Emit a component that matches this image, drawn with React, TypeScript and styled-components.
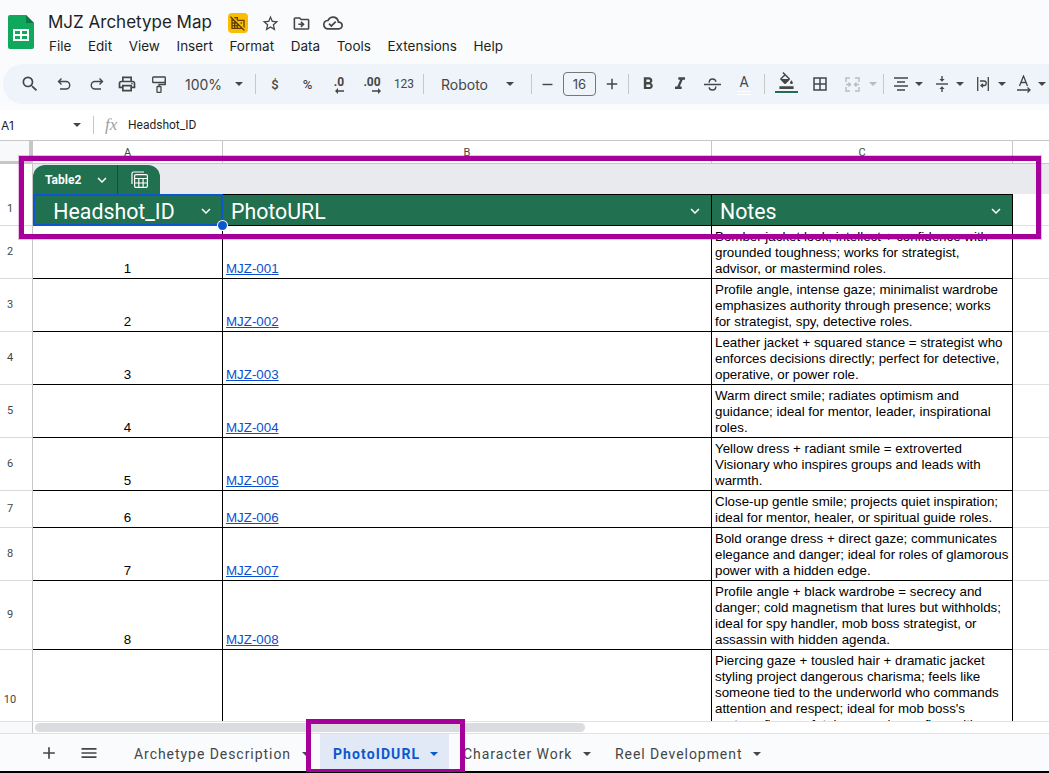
import React from 'react';
import styled, { createGlobalStyle } from 'styled-components';
import {
    MdAdd,
    MdBorderAll,
    MdFormatBold,
    MdFormatItalic,
    MdKeyboardArrowDown,
    MdMenu,
    MdOutlineCloudDone,
    MdOutlineDomainDisabled,
    MdOutlineDriveFileMove,
    MdOutlineFormatColorFill,
    MdOutlinePrint,
    MdOutlineStarBorder,
    MdRemove,
    MdSearch,
} from 'react-icons/md';

const ROWS = [
    { num: 2, height: 53, id: 1, note: 'Bomber jacket look; intellect + confidence with grounded toughness; works for strategist, advisor, or mastermind roles.' },
    { num: 3, height: 53, id: 2, note: 'Profile angle, intense gaze; minimalist wardrobe emphasizes authority through presence; works for strategist, spy, detective roles.' },
    { num: 4, height: 53, id: 3, note: 'Leather jacket + squared stance = strategist who enforces decisions directly; perfect for detective, operative, or power role.' },
    { num: 5, height: 53, id: 4, note: 'Warm direct smile; radiates optimism and guidance; ideal for mentor, leader, inspirational roles.' },
    { num: 6, height: 53, id: 5, note: 'Yellow dress + radiant smile = extroverted Visionary who inspires groups and leads with warmth.' },
    { num: 7, height: 37, id: 6, note: 'Close-up gentle smile; projects quiet inspiration; ideal for mentor, healer, or spiritual guide roles.' },
    { num: 8, height: 53, id: 7, note: 'Bold orange dress + direct gaze; communicates elegance and danger; ideal for roles of glamorous power with a hidden edge.' },
    { num: 9, height: 69, id: 8, note: 'Profile angle + black wardrobe = secrecy and danger; cold magnetism that lures but withholds; ideal for spy handler, mob boss strategist, or assassin with hidden agenda.' },
];

const LAST_NOTE =
    "Piercing gaze + tousled hair + dramatic jacket styling project dangerous charisma; feels like someone tied to the underworld who commands attention and respect; ideal for mob boss's partner, fixer, or fatal companion or fixer with hidden loyalties.";

const MENUS = ['File', 'Edit', 'View', 'Insert', 'Format', 'Data', 'Tools', 'Extensions', 'Help'];

const SheetsLogo = () => (
    <svg width="26" height="34" viewBox="0 0 26 34">
        <path d="M2 0h16l8 8v24a2 2 0 0 1-2 2H2a2 2 0 0 1-2-2V2a2 2 0 0 1 2-2z" fill="#10a85c" />
        <path d="M18 0l8 8h-8z" fill="#0b7a43" />
        <path d="M5 14h16v12H5zm2 2v3h5v-3zm7 0v3h5v-3zm-7 5v3h5v-3zm7 0v3h5v-3z" fill="#fff" fillRule="evenodd" />
    </svg>
);

const UndoIcon = () => (
    <svg width="14" height="14" viewBox="0 0 14 14" fill="none" stroke="#444746" strokeWidth="1.4">
        <path d="M4.500 1.500L1.500 4.500l3 3M1.500 4.500h7.500a3.700 3.700 0 0 1 0 7.500H3" />
    </svg>
);

const RedoIcon = () => (
    <svg width="14" height="14" viewBox="0 0 14 14" fill="none" stroke="#444746" strokeWidth="1.4">
        <path d="M9.500 1.500l3 3-3 3M12.500 4.500H5a3.700 3.700 0 0 0 0 7.500h6" />
    </svg>
);

const RollerIcon = () => (
    <svg width="14" height="17" viewBox="0 0 14 17" fill="none" stroke="#444746" strokeWidth="1.3">
        <rect x="0.700" y="1" width="12.600" height="5.500" rx="0.600" />
        <path d="M13.300 3.500v5H7v2" />
        <rect x="5" y="10.500" width="4" height="5.800" rx="0.600" />
    </svg>
);

const StrikeIcon = () => (
    <svg width="17" height="13" viewBox="0 0 17 13" fill="none" stroke="#444746" strokeWidth="1.4">
        <path d="M0 6.500h17M5.200 4.700C5.200 2.500 6.600 1 8.500 1s3.300 1.100 3.300 2.800M11.800 8.500c0 2-1.400 3.500-3.300 3.500S5.200 10.800 5.200 9.200" />
    </svg>
);

const MergeIcon = () => (
    <svg width="15" height="15" viewBox="0 0 15 15" fill="none" stroke="#b9bcbf" strokeWidth="1.4">
        <path d="M5 1H1v4M1 10v4h4M10 1h4v4M14 10v4h-4" />
        <path d="M1 7.500h4M3.500 5.500l2 2-2 2M14 7.500h-4M11.500 5.500l-2 2 2 2" />
    </svg>
);

const AlignIcon = () => (
    <svg width="14" height="14" viewBox="0 0 14 14" fill="none" stroke="#444746" strokeWidth="1.4">
        <path d="M0 1h14M3 5h8M0 9h14M3 13h8" />
    </svg>
);

const ValignIcon = () => (
    <svg width="12" height="16" viewBox="0 0 12 16" fill="#444746">
        <rect y="7.300" width="12" height="1.400" />
        <path d="M6 5.800L3.400 3H5.300V0h1.400v3h1.900zM6 10.200L8.600 13H6.700v3H5.300v-3H3.400z" />
    </svg>
);

const WrapIcon = () => (
    <svg width="12" height="14" viewBox="0 0 12 14" fill="none" stroke="#444746" strokeWidth="1.3">
        <path d="M.7 0v14M11.300 0v14" />
        <path d="M3 4h4a1.800 1.800 0 0 1 0 4.500H4.500M6 6.800L4 8.500l2 1.700" />
    </svg>
);

const RotateIcon = () => (
    <svg width="14" height="18" viewBox="0 0 14 18" fill="none" stroke="#444746" strokeWidth="1.3">
        <path d="M2.500 11L6.500 1l4 10M4 7.500h5" />
        <path d="M0 15h13M10.500 12.500L13 15l-2.500 2.500" />
    </svg>
);

const ArrowLeft = () => (
    <svg width="9" height="6" viewBox="0 0 9 6" fill="#444746">
        <path d="M3 0v2.300h6v1.400H3V6L0 3z" />
    </svg>
);

const ArrowRight = () => (
    <svg width="9" height="6" viewBox="0 0 9 6" fill="#444746">
        <path d="M6 0v2.300H0v1.400h6V6l3-3z" />
    </svg>
);

const TableCalcIcon = () => (
    <svg width="17" height="17" viewBox="0 0 17 17" fill="none" stroke="#fff" strokeWidth="1.2">
        <path d="M1 13V2.500A1.500 1.500 0 0 1 2.500 1H13" />
        <rect x="3.600" y="3.600" width="12.800" height="12.800" rx="1.300" />
        <path d="M3.600 7.500h12.800M7.800 7.500v8.900M12.100 7.500v8.900M3.600 12h12.800" />
    </svg>
);

const App = () => (
    <Page>
        <GlobalStyle />
        <Header>
            <LogoWrap>
                <SheetsLogo />
            </LogoWrap>
            <HeaderText>
                <TitleRow>
                    <DocTitle>MJZ Archetype Map</DocTitle>
                    <TitleBadge>
                        <MdOutlineDomainDisabled size={16} color="#5f4300" />
                    </TitleBadge>
                    <TitleIcon>
                        <MdOutlineStarBorder size={19} />
                    </TitleIcon>
                    <TitleIcon>
                        <MdOutlineDriveFileMove size={19} />
                    </TitleIcon>
                    <TitleIcon>
                        <MdOutlineCloudDone size={20} />
                    </TitleIcon>
                </TitleRow>
                <MenuRow>
                    {MENUS.map((item) => (
                        <MenuItem key={item}>{item}</MenuItem>
                    ))}
                </MenuRow>
            </HeaderText>
        </Header>

        <Toolbar>
            <Slot $w={32}><MdSearch size={20} /></Slot>
            <Slot $w={36}><UndoIcon /></Slot>
            <Slot $w={29}><RedoIcon /></Slot>
            <Slot $w={32}><MdOutlinePrint size={20} /></Slot>
            <Slot $w={32}><RollerIcon /></Slot>
            <ToolText $w={57} $pl={10}>100%</ToolText>
            <Slot $w={14}><Caret /></Slot>
            <Sep $ml={9} />
            <SmallTool $w={38}>$</SmallTool>
            <SmallTool $w={27}>%</SmallTool>
            <Slot $w={36}>
                <DecimalStack>
                    <DecimalText>.0</DecimalText>
                    <ArrowLeft />
                </DecimalStack>
            </Slot>
            <Slot $w={30}>
                <DecimalStack>
                    <DecimalText>.00</DecimalText>
                    <ArrowRight />
                </DecimalStack>
            </Slot>
            <SmallTool $w={34} $light>123</SmallTool>
            <Sep $ml={2} />
            <ToolText $w={74} $pl={17}>Roboto</ToolText>
            <Slot $w={24}><Caret /></Slot>
            <Sep $ml={9} />
            <Slot $w={31}><MdRemove size={17} /></Slot>
            <SizeBox>16</SizeBox>
            <Slot $w={32}><MdAdd size={18} /></Slot>
            <Sep />
            <Slot $w={38}><MdFormatBold size={20} /></Slot>
            <Slot $w={26}><MdFormatItalic size={20} /></Slot>
            <Slot $w={38}><StrikeIcon /></Slot>
            <Slot $w={26}>
                <ColorA>
                    A
                    <WhiteSwatch />
                </ColorA>
            </Slot>
            <Sep $ml={7} />
            <Slot $w={42}>
                <FillIcon>
                    <MdOutlineFormatColorFill size={17} />
                    <GreenSwatch />
                </FillIcon>
            </Slot>
            <Slot $w={26}><MdBorderAll size={18} /></Slot>
            <Slot $w={38}><MergeIcon /></Slot>
            <Slot $w={4}><Caret $muted /></Slot>
            <Sep $ml={8} />
            <IconCaret $w={46} $pl={10} $gap={7}><AlignIcon /><Caret /></IconCaret>
            <IconCaret $w={41} $pl={6} $gap={8}><ValignIcon /><Caret /></IconCaret>
            <IconCaret $w={40} $pl={6} $gap={9}><WrapIcon /><Caret /></IconCaret>
            <IconCaret $w={40} $pl={6} $gap={7}><RotateIcon /><Caret /></IconCaret>
        </Toolbar>

        <FormulaBar>
            <NameBox>
                A1
                <Caret />
            </NameBox>
            <FormulaSep />
            <FxLabel>fx</FxLabel>
            <FormulaText>Headshot_ID</FormulaText>
        </FormulaBar>

        <SheetArea>
            <GridRow $height={23}>
                <CornerCell />
                <ColumnHead>A</ColumnHead>
                <ColumnHead>B</ColumnHead>
                <ColumnHead>C</ColumnHead>
                <ColumnHead $plain />
            </GridRow>
            <GridRow $height={30}>
                <RowHead $blank />
                <TagBand>
                    <TableTag>
                        <TagName>
                            Table2
                            <MdKeyboardArrowDown size={18} />
                        </TagName>
                        <TagCalc>
                            <TableCalcIcon />
                        </TagCalc>
                    </TableTag>
                </TagBand>
            </GridRow>
            <GridRow $height={32}>
                <RowHead>1</RowHead>
                <TableHead $selected>
                    <HeadLabel $center>Headshot_ID</HeadLabel>
                    <MdKeyboardArrowDown size={18} />
                    <SelectionDot />
                </TableHead>
                <TableHead>
                    <HeadLabel>PhotoURL</HeadLabel>
                    <MdKeyboardArrowDown size={18} />
                </TableHead>
                <TableHead>
                    <HeadLabel>Notes</HeadLabel>
                    <MdKeyboardArrowDown size={18} />
                </TableHead>
                <EmptyCell />
            </GridRow>
            {ROWS.map((row) => (
                <GridRow key={row.num} $height={row.height}>
                    <RowHead>{row.num}</RowHead>
                    <IdCell>{row.id}</IdCell>
                    <BodyCell>
                        <SheetLink href="#">MJZ-00{row.id}</SheetLink>
                    </BodyCell>
                    <BodyCell>{row.note}</BodyCell>
                    <EmptyCell />
                </GridRow>
            ))}
            <GridRow $height={101}>
                <RowHead>10</RowHead>
                <IdCell />
                <BodyCell />
                <BodyCell>{LAST_NOTE}</BodyCell>
                <EmptyCell />
            </GridRow>
        </SheetArea>

        <ScrollRow>
            <ScrollCorner />
            <ScrollTrack>
                <ScrollThumb />
            </ScrollTrack>
        </ScrollRow>

        <SheetBar>
            <BarIcon $w={40}><MdAdd size={20} /></BarIcon>
            <BarIcon $w={40}><MdMenu size={20} /></BarIcon>
            <SheetTab $w={200} $ml={11}>
                Archetype Description
                <Caret />
            </SheetTab>
            <SheetTab $w={129} $active>
                PhotoIDURL
                <Caret $active />
            </SheetTab>
            <SheetTab $w={152}>
                Character Work
                <Caret />
            </SheetTab>
            <SheetTab $w={165}>
                Reel Development
                <Caret />
            </SheetTab>
        </SheetBar>

        <BottomEdge />
        <TableCallout />
        <TabCallout />
    </Page>
);

const GlobalStyle = createGlobalStyle`
    html, body {
        margin: 0;
        padding: 0;
        background: #f9fbfd;
    }
    * {
        box-sizing: border-box;
    }
`;

const Page = styled.div`
    position: relative;
    display: flex;
    flex-direction: column;
    width: 1049px;
    height: 773px;
    overflow: hidden;
    background: #f9fbfd;
    font-family: Inter, 'Liberation Sans', sans-serif;
    color: #1f1f1f;
`;

const Header = styled.div`
    display: flex;
    height: 64px;
    flex-shrink: 0;
`;

const LogoWrap = styled.div`
    width: 48px;
    padding: 15px 0 0 8px;
`;

const HeaderText = styled.div`
    display: flex;
    flex-direction: column;
    padding-top: 10px;
`;

const TitleRow = styled.div`
    display: flex;
    align-items: center;
    height: 26px;
`;

const DocTitle = styled.div`
    width: 180px;
    margin-top: -2px;
    font-size: 17px;
    line-height: 26px;
    white-space: nowrap;
`;

const TitleBadge = styled.div`
    display: flex;
    align-items: center;
    justify-content: center;
    width: 20px;
    height: 20px;
    margin-right: 7px;
    border-radius: 4px;
    background: #fbbc04;
`;

const TitleIcon = styled.div`
    display: flex;
    align-items: center;
    justify-content: center;
    width: 32px;
    color: #444746;

    &:nth-child(3) {
        width: 30px;
    }
`;

const MenuRow = styled.div`
    display: flex;
    gap: 16.6px;
    margin-top: 1px;
    margin-left: 1px;
`;

const MenuItem = styled.div`
    font-size: 13.5px;
    line-height: 18px;
    color: #1f1f1f;
    white-space: nowrap;
`;

const Toolbar = styled.div`
    display: flex;
    align-items: center;
    flex-shrink: 0;
    height: 40px;
    margin: 0 0 6px 3px;
    padding-left: 11px;
    border-radius: 20px 0 0 20px;
    background: #eff3fa;
    color: #444746;
`;

const Slot = styled.div<{ $w: number }>`
    display: flex;
    align-items: center;
    justify-content: center;
    flex-shrink: 0;
    width: ${({ $w }) => $w}px;
    height: 24px;
`;

const ToolText = styled.div<{ $w: number; $pl: number }>`
    flex-shrink: 0;
    width: ${({ $w }) => $w}px;
    padding-left: ${({ $pl }) => $pl}px;
    font-size: 14px;
    color: #444746;
    white-space: nowrap;
`;

const SmallTool = styled.div<{ $w: number; $light?: boolean }>`
    flex-shrink: 0;
    width: ${({ $w }) => $w}px;
    font-family: Roboto, sans-serif;
    font-size: ${({ $light }) => ($light ? 12 : 13)}px;
    font-weight: ${({ $light }) => ($light ? 400 : 500)};
    text-align: center;
    color: #444746;
`;

const DecimalStack = styled.div`
    display: flex;
    flex-direction: column;
    align-items: flex-end;
    margin-top: 2px;
`;

const DecimalText = styled.div`
    font-family: Roboto, sans-serif;
    font-size: 12px;
    font-weight: 700;
    line-height: 12px;
`;

const Sep = styled.div<{ $ml?: number }>`
    flex-shrink: 0;
    width: 1px;
    height: 20px;
    margin-left: ${({ $ml }) => $ml ?? 0}px;
    background: #c7c7c7;
`;

const Caret = styled.span<{ $muted?: boolean; $active?: boolean }>`
    display: inline-block;
    flex-shrink: 0;
    width: 0;
    height: 0;
    border-left: 4px solid transparent;
    border-right: 4px solid transparent;
    border-top: 4px solid ${({ $muted, $active }) => ($active ? '#0b57d0' : $muted ? '#b9bcbf' : '#444746')};
`;

const SizeBox = styled.div`
    flex-shrink: 0;
    width: 33px;
    height: 24px;
    border: 1px solid #747775;
    border-radius: 4px;
    font-size: 13px;
    line-height: 22px;
    text-align: center;
    color: #444746;
`;

const ColorA = styled.div`
    display: flex;
    flex-direction: column;
    align-items: center;
    width: 14px;
    font-family: Roboto, sans-serif;
    font-size: 14px;
    line-height: 16px;
`;

const WhiteSwatch = styled.div`
    width: 14px;
    height: 4px;
    margin-top: 1px;
    border-top: 1px solid #fff;
    border-bottom: 1px solid #fff;
`;

const FillIcon = styled.div`
    display: flex;
    flex-direction: column;
    align-items: center;
    margin-top: -3px;
`;

const GreenSwatch = styled.div`
    width: 23px;
    height: 3px;
    margin-top: 2px;
    border-top: 2px solid #1e6e52;
    border-bottom: 1px solid #fff;
`;

const IconCaret = styled.div<{ $w: number; $pl: number; $gap: number }>`
    display: flex;
    align-items: center;
    flex-shrink: 0;
    width: ${({ $w }) => $w}px;
    padding-left: ${({ $pl }) => $pl}px;
    gap: ${({ $gap }) => $gap}px;
`;

const FormulaBar = styled.div`
    display: flex;
    align-items: center;
    flex-shrink: 0;
    height: 31px;
    background: #fff;
    border-bottom: 1px solid #c7c7c7;
`;

const NameBox = styled.div`
    display: flex;
    align-items: center;
    justify-content: space-between;
    width: 93px;
    padding: 0 12px 0 1px;
    font-size: 12px;
    color: #1f1f1f;
`;

const FormulaSep = styled.div`
    width: 1px;
    height: 18px;
    background: #c7c7c7;
`;

const FxLabel = styled.div`
    width: 34px;
    padding-left: 11px;
    font-family: 'Liberation Serif', serif;
    font-size: 17px;
    font-style: italic;
    color: #9aa0a6;
`;

const FormulaText = styled.div`
    font-family: Roboto, sans-serif;
    font-size: 12px;
    color: #1f1f1f;
`;

const SheetArea = styled.div`
    flex: 1;
    min-height: 0;
    overflow: hidden;
    background: #fff;
`;

const GridRow = styled.div<{ $height: number }>`
    display: grid;
    grid-template-columns: 33px 190px 489px 301px 36px;
    height: ${({ $height }) => $height}px;
`;

const CornerCell = styled.div`
    background: #f8f9fa;
    border-right: 4px solid #c7c7c7;
    border-bottom: 3px solid #c7c7c7;
`;

const ColumnHead = styled.div<{ $plain?: boolean }>`
    display: flex;
    align-items: center;
    justify-content: center;
    border-right: ${({ $plain }) => ($plain ? 'none' : '1px solid #c7c7c7')};
    border-bottom: 1px solid #c7c7c7;
    font-family: Roboto, sans-serif;
    font-size: 11px;
    color: #444746;
`;

const RowHead = styled.div<{ $blank?: boolean }>`
    display: flex;
    align-items: center;
    justify-content: center;
    padding: 0 12px 2px 0;
    background: #fff;
    border-right: 1px solid #c7c7c7;
    border-bottom: ${({ $blank }) => ($blank ? 'none' : '1px solid #d9d9d9')};
    font-family: Roboto, sans-serif;
    font-size: 11px;
    color: #444746;
`;

const TagBand = styled.div`
    grid-column: 2 / 6;
    padding-top: 1px;
    background: #e8eaed;
`;

const TableTag = styled.div`
    display: flex;
    width: 127px;
    height: 29px;
    border-radius: 12px 12px 0 0;
    background: #217050;
    color: #fff;
`;

const TagName = styled.div`
    display: flex;
    align-items: center;
    gap: 12px;
    width: 85px;
    padding-left: 12px;
    border-right: 1px solid #174f38;
    font-family: Roboto, sans-serif;
    font-size: 12px;
    font-weight: 700;
`;

const TagCalc = styled.div`
    display: flex;
    flex: 1;
    align-items: center;
    justify-content: center;
`;

const TableHead = styled.div<{ $selected?: boolean }>`
    position: relative;
    display: flex;
    align-items: center;
    padding: 2px 7px 0 8px;
    background: #217050;
    color: #fff;
    border: 1px solid #000;
    border-left: none;
    ${({ $selected }) =>
        $selected &&
        `
        outline: 2px solid #0b57d0;
        outline-offset: -2px;
        z-index: 1;
    `}
`;

const HeadLabel = styled.div<{ $center?: boolean }>`
    flex: 1;
    padding-right: ${({ $center }) => ($center ? 10 : 0)}px;
    font-family: Roboto, sans-serif;
    font-size: 21.3px;
    text-align: ${({ $center }) => ($center ? 'center' : 'left')};
    white-space: nowrap;
`;

const SelectionDot = styled.div`
    position: absolute;
    right: -5px;
    bottom: -5px;
    width: 9px;
    height: 9px;
    border-radius: 50%;
    background: #0b57d0;
    box-shadow: 0 0 0 1px #fff;
`;

const EmptyCell = styled.div`
    border-bottom: 1px solid #e1e1e1;
`;

const BodyCell = styled.div`
    display: flex;
    align-items: flex-end;
    padding: 0 3px 1px;
    border-right: 1px solid #000;
    border-bottom: 1px solid #000;
    font-family: 'Liberation Sans', Arial, sans-serif;
    font-size: 13.33px;
    line-height: 16px;
    color: #000;
    overflow: hidden;
`;

const IdCell = styled(BodyCell)`
    justify-content: center;
    padding: 0 0 1px;
`;

const SheetLink = styled.a`
    color: #0b4fcf;
    text-decoration: underline;
`;

const ScrollRow = styled.div`
    display: flex;
    flex-shrink: 0;
    height: 13px;
    background: #fff;
    border-top: 1px solid #e1e3e1;
    border-bottom: 1px solid #e1e3e1;
`;

const ScrollCorner = styled.div`
    width: 33px;
    background: #f8f9fa;
    border-right: 1px solid #c7c7c7;
`;

const ScrollTrack = styled.div`
    flex: 1;
    padding: 1px 0 0 2px;
`;

const ScrollThumb = styled.div`
    width: 550px;
    height: 9px;
    border-radius: 5px;
    background: #dadce0;
`;

const SheetBar = styled.div`
    display: flex;
    align-items: stretch;
    flex: 0 0 37px;
    padding-left: 29px;
    background: #f9fbfd;
    color: #444746;
`;

const BarIcon = styled.div<{ $w: number }>`
    display: flex;
    align-items: center;
    justify-content: center;
    width: ${({ $w }) => $w}px;
`;

const SheetTab = styled.div<{ $w: number; $ml?: number; $active?: boolean }>`
    display: flex;
    align-items: center;
    flex-shrink: 0;
    gap: ${({ $active }) => ($active ? 10 : 11)}px;
    width: ${({ $w }) => $w}px;
    margin-left: ${({ $ml }) => $ml ?? 0}px;
    padding: 3px 0 0 ${({ $active }) => ($active ? 13 : 14)}px;
    background: ${({ $active }) => ($active ? '#e1e9f7' : 'transparent')};
    font-family: Roboto, sans-serif;
    font-size: 14px;
    font-weight: ${({ $active }) => ($active ? 700 : 400)};
    letter-spacing: ${({ $active }) => ($active ? 1.1 : 0.95)}px;
    color: ${({ $active }) => ($active ? '#0b57d0' : '#444746')};
    white-space: nowrap;
`;

const BottomEdge = styled.div`
    flex: 0 0 2px;
    background: #000;
`;

const TableCallout = styled.div`
    position: absolute;
    left: 19px;
    top: 156px;
    width: 1022px;
    height: 83px;
    border: 5px solid #a6009a;
    box-shadow: 0 0 0 1px rgba(166, 0, 154, 0.25);
    z-index: 3;
`;

const TabCallout = styled.div`
    position: absolute;
    left: 306px;
    top: 719px;
    width: 159px;
    height: 53px;
    border: 5px solid #a6009a;
    border-bottom-width: 3px;
    z-index: 3;
`;

export default App;
